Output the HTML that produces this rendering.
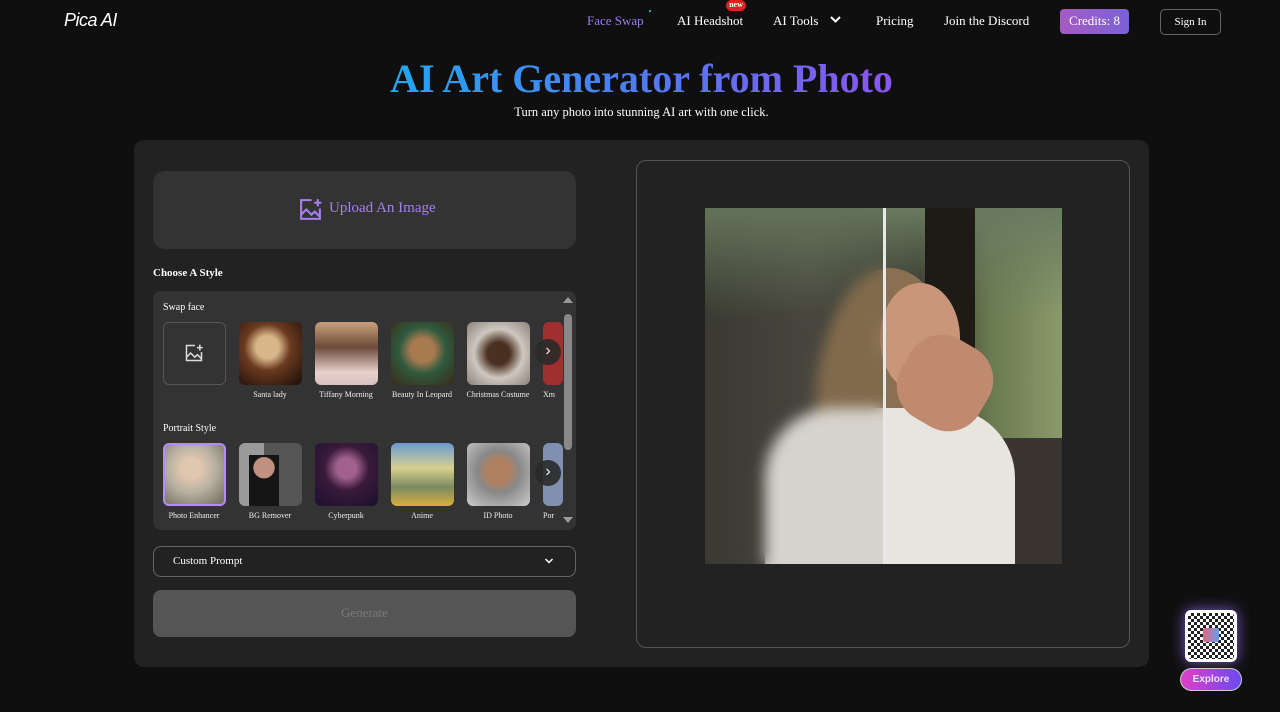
<!DOCTYPE html>
<html><head><meta charset="utf-8"><style>
*{margin:0;padding:0;box-sizing:border-box}
body{width:1280px;height:712px;background:#0f0f0f;font-family:"Liberation Serif",serif;color:#fff;position:relative;overflow:hidden}
.a{position:absolute}
.nav{font-size:13px;top:13px}
.logo{left:64px;top:10px;font-family:"Liberation Sans",sans-serif;font-style:italic;font-size:18px;letter-spacing:-0.5px}
.title{left:0;width:1283px;top:55px;text-align:center;font-size:40px;font-weight:bold}
.title span{background:linear-gradient(90deg,#22a8f0,#4f7bf0 50%,#8b55f0);-webkit-background-clip:text;color:transparent}
.card{left:134px;top:140px;width:1015px;height:527px;background:#222;border-radius:10px}
.thumb{position:absolute;width:63px;height:63px;border-radius:6px;overflow:hidden}
.lbl{position:absolute;font-size:8px;width:80px;text-align:center;color:#eee}
.arrow{position:absolute;width:26px;height:26px;border-radius:50%;background:#2a2a2a;opacity:.9;color:#fff;font-size:16px;text-align:center;line-height:24px;font-family:"Liberation Sans",sans-serif}
</style></head><body>
<div class="a logo">Pica AI</div>
<div class="a nav" style="left:587px;color:#9b7cf0">Face Swap</div>
<div class="a" style="left:649px;top:10px;width:2px;height:2px;background:#1ab;"></div>
<div class="a" style="left:726px;top:0;width:20px;height:11px;background:#e02020;border-radius:6px;font-size:8px;text-align:center;line-height:10px;font-weight:bold">new</div>
<div class="a nav" style="left:677px">AI Headshot</div>
<div class="a nav" style="left:773px">AI Tools</div>
<svg class="a" style="left:829px;top:15px" width="13" height="10"><path d="M2 2l4.5 4.5L11 2" stroke="#fff" stroke-width="2" fill="none"/></svg>
<div class="a nav" style="left:876px">Pricing</div>
<div class="a nav" style="left:944px">Join the Discord</div>
<div class="a" style="left:1060px;top:9px;width:69px;height:25px;border-radius:4px;background:linear-gradient(90deg,#a65bc2,#7a62d6);font-size:13px;text-align:center;line-height:24px">Credits: 8</div>
<div class="a" style="left:1160px;top:9px;width:61px;height:26px;border-radius:5px;border:1px solid #666;font-size:11px;text-align:center;line-height:24px">Sign In</div>
<div class="a title"><span>AI Art Generator from Photo</span></div>
<div class="a" style="left:0;width:1283px;top:105px;text-align:center;font-size:12.5px">Turn any photo into stunning AI art with one click.</div>
<div class="a card"></div>
<div class="a" style="left:153px;top:171px;width:423px;height:78px;background:#333;border-radius:12px"></div>
<svg class="a" style="left:298px;top:197px" width="25" height="25" viewBox="0 0 24 24" fill="none" stroke="#a77ff0" stroke-width="2"><path d="M13 3H3v18h18V11"/><path d="M3 17l5-5 5 5 3-3 5 5"/><path d="M19 2v7M15.5 5.5h7"/></svg>
<div class="a" style="left:329px;top:200px;font-size:15px;color:#a77ff0">Upload An Image</div>
<div class="a" style="left:153px;top:267px;font-size:11px;font-weight:bold">Choose A Style</div>
<div class="a" style="left:153px;top:291px;width:423px;height:239px;background:#333;border-radius:8px;overflow:hidden">
<div class="a" style="left:10px;top:11px;font-size:10px">Swap face</div>
<div class="a" style="left:10px;top:31px;width:63px;height:63px;border:1px solid #555;border-radius:6px"></div>
<svg class="a" style="left:31px;top:52px" width="20" height="20" viewBox="0 0 24 24" fill="none" stroke="#ddd" stroke-width="1.8"><path d="M13 3H3v18h18V11"/><path d="M3 17l5-5 5 5 3-3 5 5"/><path d="M19 2v7M15.5 5.5h7"/></svg>
<div class="thumb" style="left:86px;top:31px;background:radial-gradient(circle at 45% 40%,#d9b68a 0 22%,#6b3a20 45%,#1a0d08)"></div>
<div class="thumb" style="left:162px;top:31px;background:linear-gradient(#c9a07a,#6b4a3a 40%,#e8d0cc 80%,#d8c0bc)"></div>
<div class="thumb" style="left:238px;top:31px;background:radial-gradient(circle at 50% 45%,#a87a50 0 25%,#2f5a3e 50%,#3a2a18)"></div>
<div class="thumb" style="left:314px;top:31px;background:radial-gradient(circle at 50% 50%,#4a3020 0 25%,#cfc8c0 55%,#8a8078)"></div>
<div class="thumb" style="left:390px;top:31px;width:20px;background:#a03030"></div>
<div class="arrow" style="left:382px;top:48px">›</div>
<div class="lbl" style="left:77px;top:99px">Santa lady</div>
<div class="lbl" style="left:153px;top:99px">Tiffany Morning</div>
<div class="lbl" style="left:229px;top:99px">Beauty In Leopard</div>
<div class="lbl" style="left:305px;top:99px">Christmas Costume</div>
<div class="lbl" style="left:390px;top:99px;width:20px;text-align:left">Xm</div>
<div class="a" style="left:10px;top:132px;font-size:10px">Portrait Style</div>
<div class="thumb" style="left:10px;top:152px;border:2px solid #b58af5;background:radial-gradient(circle at 45% 40%,#e0c8b0 0 20%,#b8b0a0 50%,#6a6a5a)"></div>
<div class="thumb" style="left:86px;top:152px;background:linear-gradient(90deg,#9a9a9a 40%,#555 40%)"><div style="position:absolute;left:10px;top:12px;width:30px;height:51px;background:radial-gradient(circle at 50% 25%,#c09080 0 25%,#151515 27%)"></div></div>
<div class="thumb" style="left:162px;top:152px;background:radial-gradient(circle at 50% 40%,#a06090 0 20%,#3a1a3a 45%,#1a1030)"></div>
<div class="thumb" style="left:238px;top:152px;background:linear-gradient(#6a9ad0,#d8d090 40%,#7a8a60 70%,#d8b040)"></div>
<div class="thumb" style="left:314px;top:152px;background:radial-gradient(circle at 50% 45%,#b08060 0 25%,#888 45%,#ccc)"></div>
<div class="thumb" style="left:390px;top:152px;width:20px;background:#8090b0"></div>
<div class="arrow" style="left:382px;top:169px">›</div>
<div class="lbl" style="left:1px;top:220px">Photo Enhancer</div>
<div class="lbl" style="left:77px;top:220px">BG Remover</div>
<div class="lbl" style="left:153px;top:220px">Cyberpunk</div>
<div class="lbl" style="left:229px;top:220px">Anime</div>
<div class="lbl" style="left:305px;top:220px">ID Photo</div>
<div class="lbl" style="left:390px;top:220px;width:20px;text-align:left">Por</div>
<div class="a" style="left:410px;top:0;width:13px;height:239px;background:#333"></div>
<div class="a" style="left:411px;top:23px;width:8px;height:136px;background:#888;border-radius:4px"></div>
<div class="a" style="left:410px;top:6px;width:0;height:0;border:5px solid transparent;border-bottom:6px solid #999;border-top:0"></div>
<div class="a" style="left:410px;top:226px;width:0;height:0;border:5px solid transparent;border-top:6px solid #999;border-bottom:0"></div>
</div>
<div class="a" style="left:153px;top:546px;width:423px;height:31px;border:1px solid #666;border-radius:8px"></div>
<div class="a" style="left:173px;top:555px;font-size:11px">Custom Prompt</div>
<svg class="a" style="left:544px;top:557px" width="10" height="8"><path d="M1.5 2l3.5 3.5L8.5 2" stroke="#fff" stroke-width="1.5" fill="none"/></svg>
<div class="a" style="left:153px;top:590px;width:423px;height:47px;background:#555;border-radius:8px;color:#7a7a7a;font-size:13px;text-align:center;line-height:46px">Generate</div>
<div class="a" style="left:636px;top:160px;width:494px;height:488px;border:1px solid #555;border-radius:10px;background:#222"></div>
<div class="a" style="left:705px;top:208px;width:357px;height:356px;overflow:hidden;background:linear-gradient(90deg,#3a3a32,#4a4840 30%,#2a2822 60%,#6a7a50 80%,#8a9a6a)">
<div class="a" style="left:0;top:0;width:357px;height:110px;background:linear-gradient(#6a7a60,transparent)"></div>
<div class="a" style="left:220px;top:0;width:50px;height:260px;background:#1e1a16"></div>
<div class="a" style="left:270px;top:230px;width:87px;height:126px;background:#3a3530"></div>
<div class="a" style="left:110px;top:60px;width:150px;height:290px;border-radius:50% 50% 40% 40%;background:#8a7050"></div>
<div class="a" style="left:60px;top:200px;width:250px;height:170px;border-radius:70px 70px 0 0;background:#e8e4de"></div>
<div class="a" style="left:175px;top:75px;width:80px;height:110px;border-radius:50%;background:#c9967a"></div>
<div class="a" style="left:195px;top:130px;width:90px;height:90px;border-radius:40%;background:#c08a70;transform:rotate(30deg)"></div>
<div class="a" style="left:0;top:0;width:178px;height:356px;backdrop-filter:blur(7px);background:rgba(60,55,50,.1)"></div>
<div class="a" style="left:178px;top:0;width:3px;height:356px;background:#e8e8e8"></div>
</div>
<div class="a" style="left:1185px;top:610px;width:52px;height:52px;border-radius:6px;background:repeating-conic-gradient(#222 0 25%,#fff 0 50%) 0 0/6px 6px;border:3px solid #fff;box-shadow:0 0 14px #7a5aca"></div>
<div class="a" style="left:1203px;top:628px;width:16px;height:14px;background:linear-gradient(90deg,#f06080,#60a0f0);border-radius:2px"></div>
<div class="a" style="left:1180px;top:668px;width:62px;height:23px;border-radius:12px;background:linear-gradient(90deg,#e040c8,#6a4af0);border:1px solid #ccc;font-family:'Liberation Sans',sans-serif;font-size:10px;font-weight:bold;text-align:center;line-height:21px;color:#f0e0ff">Explore</div>
</body></html>
